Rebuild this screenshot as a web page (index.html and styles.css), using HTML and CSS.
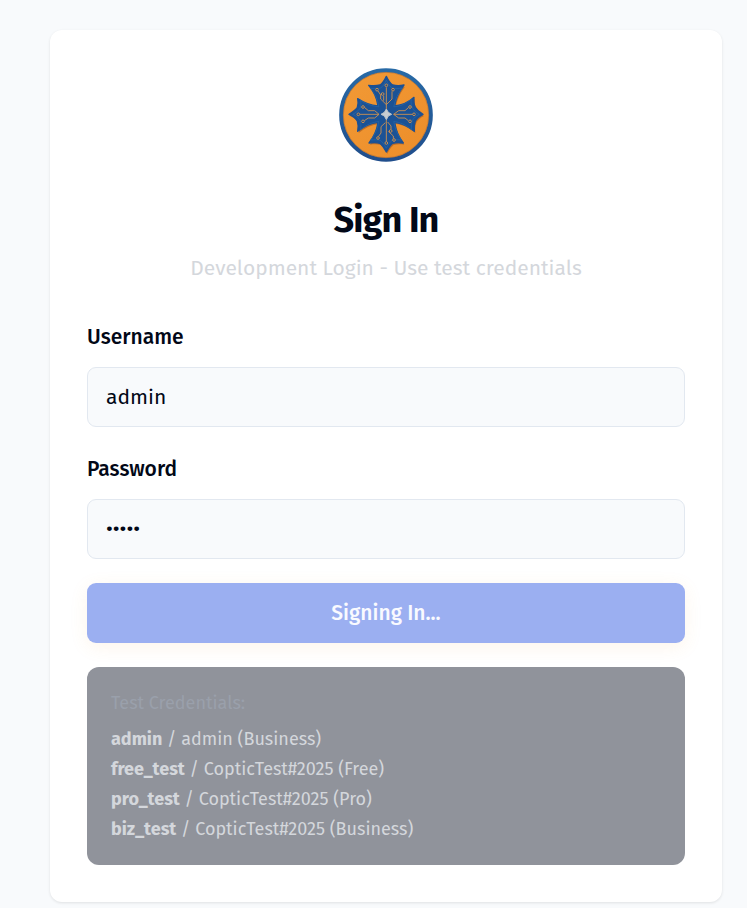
FILE: index.html
```html
<!DOCTYPE html>
<html lang="en">
<head>
<meta charset="utf-8">
<title>Sign In</title>
<link rel="stylesheet" href="styles.css">
</head>
<body>
<main class="card">
  <svg class="logo" viewBox="24 24 282 282" aria-hidden="true">
    <defs>
      <linearGradient id="disc" x1="0" y1="0" x2="1" y2="1"><stop offset="0" stop-color="#f29a36"/><stop offset="1" stop-color="#ec8d29"/></linearGradient>
      <linearGradient id="rim" x1="0" y1="0" x2="0" y2="1"><stop offset="0" stop-color="#286aa6"/><stop offset="1" stop-color="#204e8c"/></linearGradient>
      <path id="cross" d="M166 49C172 62 178 71 185 75C196 78 207 78 219 75C206 92 194 115 191 138C211 136 231 129 249 112C248 124 249 135 253 142C258 151 266 157 276 163C266 168 257 175 253 183C249 193 249 203 250 214C232 199 212 189 191 187C194 209 203 231 217 249C206 247 195 247 185 250C177 256 172 265 166 276C160 265 154 256 147 250C137 247 126 247 114 249C128 231 138 209 141 187C120 189 99 198 80 214C82 203 82 192 79 183C75 175 65 168 54 163C64 157 74 151 79 142C82 134 82 126 80 116C99 129 120 136 141 138C138 115 128 93 113 76C125 78 136 78 147 75C154 71 160 62 166 49Z"/>
    </defs>
    <circle cx="165" cy="165" r="134.5" fill="url(#disc)" stroke="url(#rim)" stroke-width="12"/>
    <circle cx="165" cy="165" r="128" fill="none" stroke="#b97235" stroke-width="2"/>
    <use href="#cross" x="3" y="5" fill="#a65b20" opacity=".65"/>
    <use href="#cross" fill="#1b5295" stroke="#1c5093" stroke-width="4" stroke-linejoin="round"/>
    <use href="#cross" class="bevel" transform="translate(165 163) scale(.9) translate(-165 -163)"/>
    <g class="trace">
      <path d="M166 148V82M166 134L149 117V105L141 93M166 134L183 117V94M158 122V107M166 180V248M163 188L150 200V219L142 230M170 186L180 198V209M172 214L187 228V236M144 163H86M144 163L131 152H112L100 142M144 163L131 174H112L100 182M188 163H246M188 163L203 152H222L232 143M188 163L203 174H222L232 182"/>
      <circle cx="166" cy="76" r="4"/><circle cx="138" cy="89" r="4"/><circle cx="155" cy="102" r="4"/><circle cx="186" cy="89" r="4"/>
      <circle cx="96" cy="141" r="4"/><circle cx="82" cy="163" r="4"/><circle cx="96" cy="184" r="4"/>
      <circle cx="237" cy="141" r="4"/><circle cx="249" cy="163" r="4"/><circle cx="237" cy="184" r="4"/>
      <circle cx="141" cy="234" r="4"/><circle cx="166" cy="249" r="4"/><circle cx="179" cy="213" r="4"/><circle cx="189" cy="240" r="4"/>
    </g>
    <path class="gem" d="M166 147L172 157L182 163L172 168L166 179L160 168L150 163L160 157Z"/>
  </svg>
  <h1 class="title">Sign In</h1>
  <p class="subtitle">Development Login - Use test credentials</p>
  <form class="form">
    <div class="field">
      <label for="username">Username</label>
      <input id="username" type="text" value="admin">
    </div>
    <div class="field">
      <label for="password">Password</label>
      <input id="password" type="password" value="admin">
    </div>
    <button class="submit" type="button">Signing In...</button>
  </form>
  <section class="credentials">
    <p class="heading">Test Credentials:</p>
    <p><strong>admin</strong> / admin (Business)</p>
    <p><strong>free_test</strong> / CopticTest#2025 (Free)</p>
    <p><strong>pro_test</strong> / CopticTest#2025 (Pro)</p>
    <p><strong>biz_test</strong> / CopticTest#2025 (Business)</p>
  </section>
</main>
</body>
</html>
```
FILE: styles.css
```css
* { box-sizing: border-box; }

body {
  margin: 0;
  height: 908px;
  overflow: hidden;
  padding: 30px 25px 0 50px;
  background: #f8fafc;
  color: #020817;
  font-family: "Fira Sans", "Noto Sans", sans-serif;
}

p, h1 { margin: 0; }

.card {
  display: flex;
  flex-direction: column;
  width: 672px;
  height: 872px;
  padding: 38px 37px 37px;
  border-radius: 12px;
  background: #fff;
  box-shadow: 0 1px 3px rgb(0 0 0 / 10%);
}

.logo {
  display: block;
  width: 94px;
  height: 94px;
  margin: 0 auto;
}

.bevel { fill: none; stroke: #2869a9; stroke-width: 3; opacity: .75; }
.trace { fill: #1b4e89; stroke: #cf914f; stroke-width: 2.7; }
.trace path { fill: none; }
.gem { fill: #c7cdd2; stroke: #b9c1c8; stroke-width: 3; stroke-linejoin: round; }

.title {
  margin-top: 36px;
  text-align: center;
  font-size: 36px;
  font-weight: 700;
  line-height: 45px;
  letter-spacing: -.9px;
}

.subtitle {
  margin-top: 10px;
  text-align: center;
  font-size: 21px;
  line-height: 30px;
  color: #d4d7dc;
}

.form {
  display: flex;
  flex-direction: column;
  gap: 24px;
  margin-top: 39px;
}

.field + .field { margin-top: 3px; }

.field label {
  display: block;
  height: 45px;
  font-size: 21px;
  font-weight: 500;
  line-height: 30px;
}

.field input {
  display: block;
  width: 100%;
  height: 60px;
  padding: 0 18px;
  border: 1px solid #e2e8f0;
  border-radius: 9px;
  outline: none;
  background: #f8fafc;
  color: inherit;
  font: 21px/30px "Fira Sans", "Noto Sans", sans-serif;
}

.submit {
  height: 60px;
  border: 0;
  border-radius: 9px;
  background: #9baff1;
  box-shadow: 0 4px 18px rgb(240 160 60 / 10%);
  color: #f9faff;
  font: 500 21px/30px "Fira Sans", "Noto Sans", sans-serif;
}

.credentials {
  height: 198px;
  margin-top: 24px;
  padding: 21px 24px;
  border-radius: 12px;
  background: #90939b;
  color: #d4d7dc;
  font-size: 18px;
  line-height: 30px;
}

.credentials .heading { margin-bottom: 6px; color: #9aa0ab; }
```
